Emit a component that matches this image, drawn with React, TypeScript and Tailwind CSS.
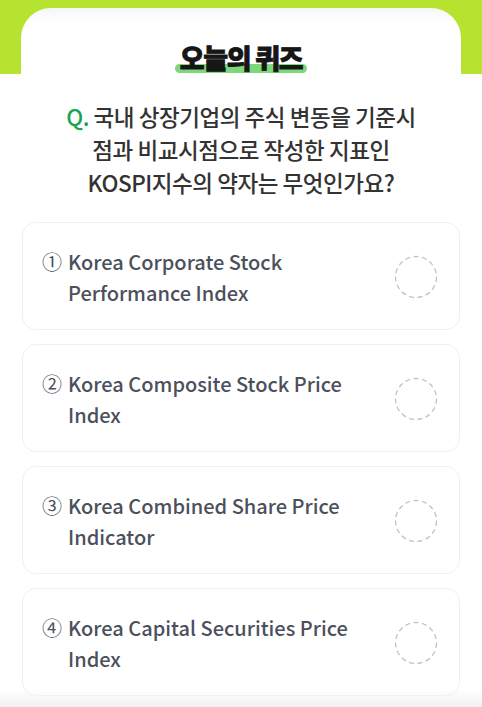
import * as React from "react";

const options = [
  { no: "①", text: "Korea Corporate Stock Performance Index" },
  { no: "②", text: "Korea Composite Stock Price Index" },
  { no: "③", text: "Korea Combined Share Price Indicator" },
  { no: "④", text: "Korea Capital Securities Price Index" },
];

function DashedCircle() {
  return (
    <svg width="44" height="44" viewBox="0 0 44 44" className="shrink-0">
      <circle cx="22" cy="22" r="20.5" fill="none" stroke="#c2c2c4" strokeWidth="1.3" strokeDasharray="5 3.5" />
    </svg>
  );
}

export default function App() {
  return (
    <div
      className="min-h-screen bg-[linear-gradient(to_bottom,#b6e230_74px,#ffffff_74px)] pt-[8px]"
      style={{ fontFamily: '"Noto Sans CJK KR", "Noto Sans", sans-serif' }}
    >
      <div className="mx-[21px] rounded-t-[30px] bg-[linear-gradient(to_bottom,#f6f6f6,#ffffff_14px)] px-[1px] pt-[34px]">
        <div className="flex justify-center">
          <h1 className="relative inline-block px-[4px] text-[27px] leading-[32px] font-black tracking-[-0.05em] text-[#161616] [-webkit-text-stroke:0.8px_#161616]">
            <span className="absolute inset-x-[-1px] top-[22px] h-[9px] rounded-full bg-[#7dd87b]" />
            <span className="relative">오늘의 퀴즈</span>
          </h1>
        </div>

        <p className="mt-[26px] text-center text-[22.5px] leading-[33px] font-medium tracking-[-0.02em] text-[#333333]">
          <span className="text-[#1aa454]">Q.</span> 국내 상장기업의 주식 변동을 기준시
          <br />
          점과 비교시점으로 작성한 지표인
          <br />
          KOSPI지수의 약자는 무엇인가요?
        </p>

        <ul className="mt-[23px] flex flex-col gap-[14px]">
          {options.map((o) => (
            <li
              key={o.no}
              className="flex items-center rounded-[14px] border border-[#eef0f5] bg-white pt-[23px] pr-[21px] pb-[21px] pl-[19px]"
            >
              <div className="flex flex-1 gap-[6px] pr-[30px] text-[20px] leading-[31px] font-medium text-[#4b505c]">
                <span className="font-normal">{o.no}</span>
                <span className="flex-1">{o.text}</span>
              </div>
              <DashedCircle />
            </li>
          ))}
        </ul>
      </div>
      <div className="pointer-events-none fixed inset-x-0 bottom-0 h-[18px] bg-gradient-to-b from-transparent to-[#f1f1f4]" />
    </div>
  );
}
